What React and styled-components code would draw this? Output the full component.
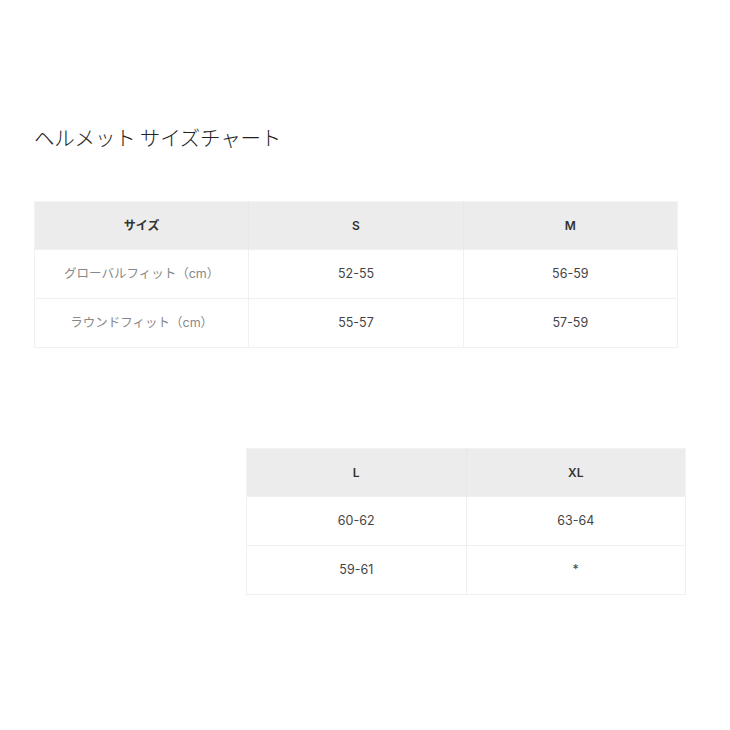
import React from "react";
import styled, { createGlobalStyle } from "styled-components";

const Global = createGlobalStyle`
  html, body { margin: 0; padding: 0; background: #fff; }
  body { font-family: Inter, "Noto Sans CJK JP", sans-serif; }
`;

const Page = styled.div`
  width: 730px;
  height: 730px;
  padding: 124px 0 0 34px;
  box-sizing: border-box;
`;

const Title = styled.h1`
  margin: 0 0 50px;
  font-family: "Noto Sans CJK JP", sans-serif;
  font-weight: 300;
  font-size: 20.5px;
  line-height: 27px;
  color: #222;
  letter-spacing: -0.2px;
`;

const Table = styled.table`
  border-collapse: collapse;
  table-layout: fixed;
  width: ${(p) => p.$width}px;
  margin-left: ${(p) => p.$offset || 0}px;
  margin-top: ${(p) => p.$top || 0}px;
  border: 1px solid #f3f3f3;
`;

const Th = styled.th`
  background: #ececec;
  height: 47px;
  padding: 0;
  font-family: Inter, "Noto Sans CJK JP", sans-serif;
  font-weight: 600;
  font-size: 12px;
  line-height: 14px;
  color: #333;
  text-align: center;
  border-left: 1px solid #e8e8e8;
  &:first-child { border-left: none; }
`;

const Td = styled.td`
  height: 48px;
  padding: 0;
  font-family: Inter, "Noto Sans CJK JP", sans-serif;
  font-size: 12.5px;
  line-height: 14px;
  color: ${(p) => (p.$label ? "#888" : "#444")};
  text-align: center;
  border: 1px solid #f0f0f0;
`;

const table1 = {
  head: ["サイズ", "S", "M"],
  rows: [
    ["グローバルフィット（cm）", "52-55", "56-59"],
    ["ラウンドフィット（cm）", "55-57", "57-59"],
  ],
};

const table2 = {
  head: ["L", "XL"],
  rows: [
    ["60-62", "63-64"],
    ["59-61", "*"],
  ],
};

function SizeTable({ data, width, offset, top, labelFirst }) {
  return (
    <Table $width={width} $offset={offset} $top={top}>
      <thead>
        <tr>
          {data.head.map((h) => (
            <Th key={h}>{h}</Th>
          ))}
        </tr>
      </thead>
      <tbody>
        {data.rows.map((r, i) => (
          <tr key={i}>
            {r.map((c, j) => (
              <Td key={j} $label={labelFirst && j === 0}>
                {c}
              </Td>
            ))}
          </tr>
        ))}
      </tbody>
    </Table>
  );
}

export default function App() {
  return (
    <>
      <Global />
      <Page>
        <Title>ヘルメット サイズチャート</Title>
        <SizeTable data={table1} width={644} labelFirst />
        <SizeTable data={table2} width={440} offset={212} top={100} />
      </Page>
    </>
  );
}
